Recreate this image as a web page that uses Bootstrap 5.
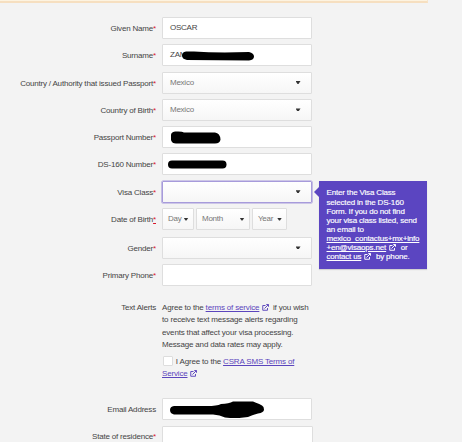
<!DOCTYPE html>
<html lang="en">
<head>
<meta charset="utf-8">
<meta name="viewport" content="width=device-width, initial-scale=1">
<title>Visa application</title>
<link href="https://cdn.jsdelivr.net/npm/bootstrap@5.3.0/dist/css/bootstrap.min.css" rel="stylesheet">
<style>
body{background:#f3f3f3;font-family:"Liberation Sans",Arial,sans-serif;font-size:8px;letter-spacing:-.19px;line-height:12.2px;color:#444;height:442px}
.notice{width:428px;height:3px;background:#fdf3e0;border-bottom:2px solid #f6dfc0;border-right:1px solid #f8e6cc}
.visa-form{padding-top:14px}
.line{height:22px;margin-bottom:5.3px}
.line.birth{margin-bottom:6.9px}
.line.phone{margin-bottom:16px}
.lbl{width:156px;text-align:right;padding-top:6px;flex:none;white-space:nowrap;color:#444}
.lbl i{color:#d8182c;font-style:normal}
.lbl u{color:#d8182c}
.fld{width:149.5px;height:22px;margin-left:6px;border:1px solid #dedede;border-radius:1px;background:#fff;padding:0 7px;color:#444;box-shadow:none;letter-spacing:-.25px;line-height:20px}
.pick{background:linear-gradient(#fff,#f6f6f6);color:#777}
.pick::after{content:"";width:5px;height:3px;background:#333;clip-path:polygon(0 0,100% 0,60% 100%,40% 100%);margin-right:3px}
.pick.short{padding:0 5px}
.pick.short::after{margin-right:-1px}
.w-day{width:31.5px}.w-month{width:53.5px;margin-left:2.5px}.w-year{width:35px;margin-left:2.5px}
.w-state{width:151px;height:26px;margin-left:5.5px;margin-top:.5px}
.active-pick{border-color:#a79bdb;box-shadow:0 0 0 .6px #a79bdb}
a,a:hover{color:#5b45bd}
.ext{width:7px;height:7px;fill:none;stroke:currentColor;stroke-width:1.9;color:#5b45bd;vertical-align:-1px;margin:0 1px 0 .5px}
.copy{margin-left:6px;width:152px;white-space:nowrap;color:#444;letter-spacing:-.17px}
.copy .gap{margin-left:1px}
.alerts{height:95.6px}
.alerts .lbl{padding-top:0}
.agree{margin-top:4.6px}
.box{width:10px;height:10px;border:1px solid #ddd;border-radius:1px;background:#fff;margin:0 3.3px 0 .5px;display:inline-block;vertical-align:-2.5px}
.hint{left:159px;top:.4px;width:108.3px;height:88px;background:#5b45c1;color:#fff;padding:7.3px 0 0 7.5px;line-height:9.1px;white-space:nowrap;box-shadow:0 1px 1px #0002;letter-spacing:-.17px;-webkit-text-stroke:.15px #fff}
.hint::before{content:"";position:absolute;left:-5px;top:6px;border:5px solid transparent;border-left:0;border-right-color:#5b45c1}
.hint a,.hint .ext{color:#fff}
.ink{position:absolute;fill:#000}
</style>
</head>
<body class="overflow-hidden">
<svg class="d-none"><symbol id="ext" viewBox="0 0 14 14"><path d="M7 3H1.5v9.5H11V8M5 9l7.500-7.500M8.500 1H13v4.500"/></symbol></svg>
<div class="notice"></div>
<form class="visa-form">
<div class="line d-flex"><label class="lbl">Given Name<i>*</i></label><div class="fld">OSCAR</div></div>
<div class="line d-flex"><label class="lbl">Surname<i>*</i></label><div class="fld position-relative">ZAM<svg class="ink" style="left:19px;top:6px" width="73" height="10"><path d="M4 .5Q0 1 0 4.500T5 9l62 .5q5-.5 5-4T67 1Q35 2 12 .5z"/></svg></div></div>
<div class="line d-flex"><label class="lbl">Country / Authority that issued Passport<i>*</i></label><div class="fld pick d-flex align-items-center justify-content-between">Mexico</div></div>
<div class="line d-flex"><label class="lbl">Country of Birth<i>*</i></label><div class="fld pick d-flex align-items-center justify-content-between">Mexico</div></div>
<div class="line d-flex"><label class="lbl">Passport Number<i>*</i></label><div class="fld position-relative"><svg class="ink" style="left:8px;top:4px" width="51" height="13"><path d="M4 .5Q0 1 0 4v5q1 3.500 5 3.500h39q5 0 5.500-4Q49 2 44 1.500H13Q11 0 4 .5z"/></svg></div></div>
<div class="line d-flex"><label class="lbl">DS-160 Number<i>*</i></label><div class="fld position-relative"><svg class="ink" style="left:5px;top:6px" width="60" height="9"><rect y=".5" width="58.500" height="8" rx="4"/></svg></div></div>
<div class="line d-flex"><label class="lbl">Visa Class<i>*</i></label><div class="position-relative"><div class="fld pick active-pick d-flex align-items-center justify-content-end"></div>
<div class="hint position-absolute ms-1">Enter the Visa Class<br>selected in the DS-160<br>Form. If you do not find<br>your visa class listed, send<br>an email to<br><a href="#">mexico_contactus+mx+info<br>+en@visaops.net</a> <svg class="ext"><use href="#ext"/></svg> &nbsp;or<br><a href="#">contact us</a> <svg class="ext"><use href="#ext"/></svg> &nbsp;by phone.</div></div></div>
<div class="line birth d-flex"><label class="lbl">Date of Birth<i><u>*</u></i></label><div class="fld pick short w-day d-flex align-items-center justify-content-between">Day</div><div class="fld pick short w-month d-flex align-items-center justify-content-between">Month</div><div class="fld pick short w-year d-flex align-items-center justify-content-between">Year</div></div>
<div class="line d-flex"><label class="lbl">Gender<i>*</i></label><div class="fld pick d-flex align-items-center justify-content-end"></div></div>
<div class="line phone d-flex"><label class="lbl">Primary Phone<i>*</i></label><div class="fld"></div></div>
<div class="alerts d-flex"><div class="lbl">Text Alerts</div><div class="copy">Agree to the <a href="#">terms of service</a> <svg class="ext"><use href="#ext"/></svg> <span class="gap">if you wish</span><br>to receive text message alerts regarding<br>events that affect your visa processing.<br>Message and data rates may apply.<div class="agree"><span class="box"></span>I Agree to the <a href="#">CSRA SMS Terms of<br>Service</a> <svg class="ext"><use href="#ext"/></svg></div></div></div>
<div class="line d-flex"><label class="lbl">Email Address</label><div class="fld position-relative"><svg class="ink" style="left:7px;top:2px" width="95" height="17"><path d="M4 5h33q10 0 14-2 8-.5 12-2.500h20q8 3 9 4 2 1 2 4t-6 4q-5 1-10 3.500-12 2-23 .5-5-2.500-12-3H4q-4-1-4-4.500T4 5z"/></svg></div></div>
<div class="line d-flex"><label class="lbl">State of residence<i>*</i></label><div class="fld w-state"></div></div>
</form>
<script src="https://cdn.jsdelivr.net/npm/bootstrap@5.3.0/dist/js/bootstrap.bundle.min.js"></script>
</body>
</html>
